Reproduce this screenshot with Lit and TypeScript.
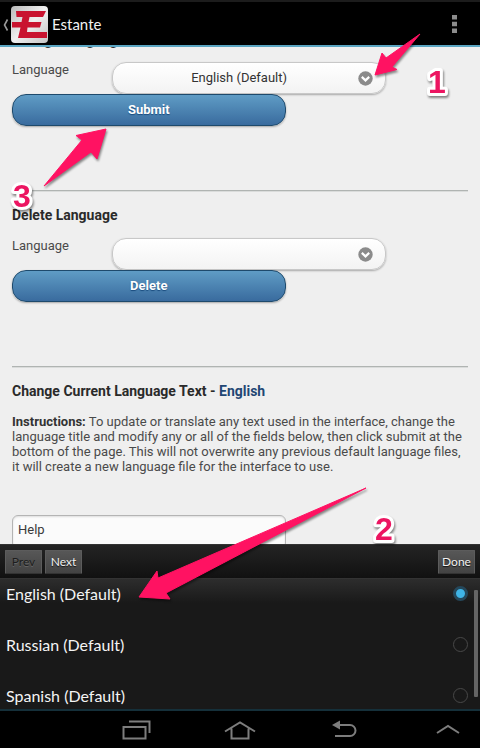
import { LitElement, html, css, svg } from "lit";
import { customElement, property, state } from "lit/decorators.js";

const HAND = css`"Choco Cooky", Lato, "Noto Sans", sans-serif`;

@customElement("app-bar")
class AppBar extends LitElement {
  static styles = css`
    :host { display: block; background: #000; border-top: 2px solid #1c1c1c; border-bottom: 2px solid #5aa5c2; }
    header { display: flex; align-items: center; height: 43px; padding: 0 23px 0 2px; }
    button { border: 0; padding: 0; background: none; display: flex; align-items: center; }
    svg { display: block; }
    .home { gap: 2px; padding-top: 2px; }
    h1 { flex: 1; margin: 0 0 0 4px; color: #f2f2f2; font: 400 15px/20px ${HAND}; }
    .menu { height: 30px; justify-content: center; }
  `;
  render() {
    return html`<header>
      <button class="home" aria-label="Back">
        <svg width="7" height="14" viewBox="0 0 7 14"><path d="M5.500 1.500 2.500 7l3 5.500" fill="none" stroke="#999" stroke-width="1.600" /></svg>
        <svg width="37" height="37" viewBox="0 0 37 37">
          <defs><linearGradient id="g" x2="1" y2="1"><stop offset="0" stop-color="#b9b9b9" /><stop offset=".5" stop-color="#f0f0f0" /><stop offset="1" stop-color="#c4c4c4" /></linearGradient></defs>
          <rect width="37" height="37" rx="4" fill="url(#g)" />
          <path d="M5 5H35L32 11H18.500L17.500 16H30.500L29 21.500H16.500L16 26H36V32H7L9.500 21.500H1V16H10.500L11.500 11H5.500Z" fill="#c9132f" />
        </svg>
      </button>
      <h1>Estante</h1>
      <button class="menu" aria-label="Menu">
        <svg width="5" height="18" viewBox="0 0 5 18" fill="#8c8c8c"><path d="M0 0h5v4.600H0zM0 6.700h5v4.600H0zM0 13.400h5V18H0z" /></svg>
      </button>
    </header>`;
  }
}

@customElement("language-form")
class LanguageForm extends LitElement {
  @property() heading = "";
  @property() action = "";
  @property() value = "";
  static styles = css`
    :host { display: block; border-bottom: 1px solid #b0b4b2; padding-bottom: 64px; box-shadow: 0 1px 0 #dadcdb; margin-bottom: 14px; }
    h2 { margin: 0 0 13px; font: 700 14px/20px Roboto, sans-serif; color: #2a2a2a; }
    :host(.scrolled) h2 { margin-bottom: 12px; }
    form { display: block; }
    .row { display: flex; }
    label { width: 22%; font: 400 13px/16px Roboto, sans-serif; color: #4a4a4a; }
    .pick { position: relative; width: 60%; height: 32px; }
    select { appearance: none; box-sizing: border-box; width: 100%; height: 32px; border: 1px solid #c8c8c8; border-radius: 14px;
      background: linear-gradient(#fff, #f3f3f3); box-shadow: 0 1px 2px rgba(0, 0, 0, .3); color: #333;
      font: 400 13px/20px Roboto, sans-serif; text-align-last: center; padding: 0 20px 0 0; }
    .pick svg { position: absolute; right: 13px; top: 9px; pointer-events: none; }
    .go { display: block; box-sizing: border-box; position: relative; width: 60%; height: 32px; border: 1px solid #1e4a6c; border-radius: 14px;
      background: linear-gradient(#5f9cc5, #396b9e); color: #fff; font: 700 13px/20px Roboto, sans-serif;
      text-shadow: 0 1px 1px #194b7e; box-shadow: 0 1px 2px rgba(0, 0, 0, .3); }
  `;
  render() {
    return html`<h2>${this.heading}</h2>
      <form @submit=${(e: Event) => e.preventDefault()}>
        <div class="row">
          <label for="lang">Language</label>
          <div class="pick">
            <select id="lang"><option>${this.value}</option></select>
            <svg width="15" height="15" viewBox="0 0 15 15"><circle cx="7.500" cy="7.500" r="7.200" fill="#8b8b8b" /><path d="M3.800 5.900 7.500 9.400l3.700-3.500" fill="none" stroke="#fff" stroke-width="2.200" /></svg>
          </div>
        </div>
        <button class="go">${this.action}</button>
      </form>`;
  }
}

@customElement("option-picker")
class OptionPicker extends LitElement {
  @state() selected = "English (Default)";
  options = ["English (Default)", "Russian (Default)", "Spanish (Default)"];
  static styles = css`
    :host { display: block; position: relative; background: #191919; border-bottom: 2px solid #15303a; }
    .bar { display: flex; gap: 3px; align-items: center; height: 34px; padding: 0 5px; background: linear-gradient(#242424, #111); box-sizing: border-box; border-top: 1px solid #333; }
    .bar button { width: 37px; height: 24px; padding: 0; border: 1px solid #5c5c5c; border-bottom-color: #333; border-radius: 1px; background: linear-gradient(#575757, #434343);
      color: #f0f0f0; font: 400 12px/20px ${HAND}; text-shadow: 0 1px 1px #111; }
    .bar button:disabled { color: #1d1d1d; text-shadow: 0 1px 0 #666; }
    .bar .done { margin-left: auto; }
    .list { height: 131px; overflow: hidden; border-top: 1px solid #333; background: linear-gradient(#2d2d2d, #191919 24px); box-sizing: border-box; }
    .items { margin-top: -11px; }
    label { display: flex; align-items: center; justify-content: space-between; height: 51px; padding: 0 12px 0 6px; color: #f4f4f4; font: 400 16px/20px ${HAND}; }
    input { appearance: none; box-sizing: border-box; width: 15px; height: 15px; margin: 0; border-radius: 50%; border: 1px solid #484848; }
    input:checked { border: 3px solid #25475a; background: #3fb4e6; }
    .thumb { position: absolute; right: 2px; top: 46px; width: 4px; height: 107px; background: #656565; border-radius: 1px; }
  `;
  render() {
    return html`<div class="bar"><button disabled>Prev</button><button>Next</button><button class="done">Done</button></div>
      <div class="list"><div class="items">
        ${this.options.map((o) => html`<label>${o}<input type="radio" name="language" .checked=${o === this.selected} @change=${() => (this.selected = o)} /></label>`)}
      </div></div>
      <div class="thumb"></div>`;
  }
}

@customElement("nav-keys")
class NavKeys extends LitElement {
  static styles = css`
    :host { display: block; overflow: hidden; background: #000; }
    nav { display: grid; grid-template-columns: repeat(4, 1fr); height: 37px; margin-left: 84px; margin-right: -20px; }
    button { display: flex; align-items: center; justify-content: center; border: 0; padding: 0; background: none; }
  `;
  key(name: string, shape: unknown) {
    return html`<button aria-label=${name}><svg width="32" height="22" viewBox="0 0 32 22" fill="none" stroke="#7d7d7d" stroke-width="2">${shape}</svg></button>`;
  }
  render() {
    return html`<nav>
      ${this.key("Recent apps", svg`<path d="M3.500 8h22v11.500h-22zM9 2.500h20.500V14" />`)}
      ${this.key("Home", svg`<path d="M1 12.500 16 3.500l15 9M7.500 9.500v10h17v-10" />`)}
      ${this.key("Back", svg`<path d="M12 6h10a5.500 5.500 0 0 1 0 11H7" /><path d="M4 6l8-4.500v9z" fill="#7d7d7d" stroke="none" />`)}
      ${this.key("Show panel", svg`<path d="M5 14l11-7 11 7" />`)}
    </nav>`;
  }
}

@customElement("step-marks")
class StepMarks extends LitElement {
  static styles = css`
    :host { position: absolute; inset: 0; pointer-events: none; }
    svg { display: block; width: 100%; height: 100%; filter: drop-shadow(1px 2px 1px rgba(0, 0, 0, .45)); }
    text { font: 700 32px "Liberation Sans", Arial, sans-serif; fill: #ec1561; stroke: #fff; stroke-width: 6px; stroke-linejoin: round; paint-order: stroke; }
    path { fill: #ff1262; stroke: #ff1262; stroke-width: 1px; stroke-linejoin: round; }
  `;
  render() {
    return html`<svg>
      <path d="M420 34 386 58 382 53 375 75 397 69.500 392 67Z" />
      <path d="M44 186 82 140 76 135.500 106 129 97 159 91 152Z" />
      <path d="M366 488 158 578 157 571 139 597 170 599 166 593Z" />
      <text x="428" y="93">1</text>
      <text x="375" y="540">2</text>
      <text x="13" y="207">3</text>
    </svg>`;
  }
}

@customElement("app-root")
class AppRoot extends LitElement {
  static styles = css`
    :host { display: flex; flex-direction: column; position: relative; height: 100vh; overflow: hidden; background: #efefef; font-family: Roboto, sans-serif; }
    main { flex: 1; min-height: 0; overflow: hidden; padding: 0 12px; color: #444; }
    .scrolled { margin-top: -17px; }
    h2 { margin: 0 0 13px; font: 700 14px/20px Roboto, sans-serif; color: #2a2a2a; }
    h2 a { color: #1f4774; text-decoration: none; }
    p { margin: 0 0 41px; font: 400 13px/15px Roboto, sans-serif; color: #4a4a4a; }
    strong { color: #333; }
    input { display: block; box-sizing: border-box; width: 60%; height: 34px; border: 1px solid #b4b4b4; border-radius: 6px; padding: 0 5px 6px; background: #fbfbfb; box-shadow: inset 0 1px 2px #ddd; font: 400 13px/20px Roboto, sans-serif; color: #3a3a3a; }
  `;
  render() {
    return html`<app-bar></app-bar>
      <main>
        <language-form class="scrolled" heading="Change Language" action="Submit" value="English (Default)"></language-form>
        <language-form heading="Delete Language" action="Delete"></language-form>
        <h2>Change Current Language Text - <a href="#english">English</a></h2>
        <p><strong>Instructions:</strong> To update or translate any text used in the interface, change the language title and modify any or all of the fields below, then click submit at the bottom of the page. This will not overwrite any previous default language files, it will create a new language file for the interface to use.</p>
        <input aria-label="Help" value="Help" />
      </main>
      <option-picker></option-picker>
      <nav-keys></nav-keys>
      <step-marks></step-marks>`;
  }
}
